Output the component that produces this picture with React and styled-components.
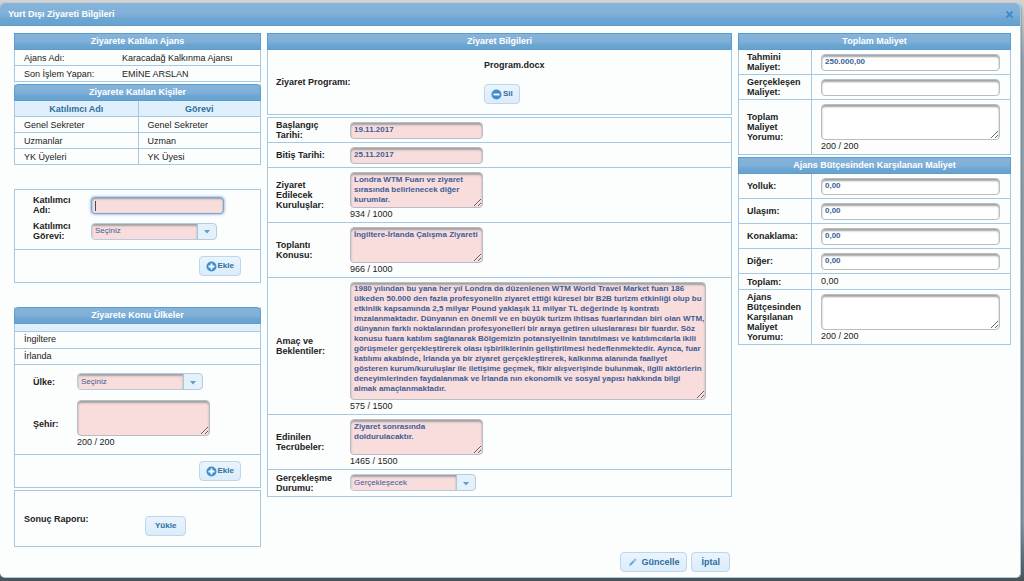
import React from "react";
import styled, { createGlobalStyle, css } from "styled-components";

const line = "#a6c9e2";
const ink = "#222222";
const blue = "#2e6e9e";
const fieldInk = "#3b5f96";

const Global = createGlobalStyle`
  * { box-sizing: border-box; }
  body {
    margin: 0;
    min-height: 100vh;
    display: flow-root;
    background: linear-gradient(#d3d3d3, #98a2a9 60px, #8a959d 90%, #4b5258);
    font: 9px/10px "Liberation Sans", Arial, sans-serif;
    color: ${ink};
  }
`;

const Dialog = styled.main`
  margin: 3px 3px 3px 0;
  background: #fcfdfd;
  border-right: 1px solid ${line};
  border-bottom: 1px solid ${line};
  border-radius: 5px;
  box-shadow: 0 1px 2px #4b5258;
  padding-bottom: 5px;
`;

const headerFill = css`
  color: #ffffff;
  font-weight: bold;
  background: linear-gradient(#86b4da, #7fb0d8 50%, #6ba5d2 75%, #68a3d0);
`;

const TitleBar = styled.header`
  ${headerFill}
  display: flex;
  align-items: center;
  justify-content: space-between;
  height: 23px;
  padding: 0 6px 0 8px;
  border-radius: 5px 5px 0 0;
  border-bottom: 1px solid #5c9ccc;
`;

const Title = styled.h1`
  margin: 0;
  font-size: 9px;
`;

const CloseButton = styled.button`
  border: 0;
  padding: 0;
  width: 9px;
  height: 9px;
  background: none;
  display: flex;
`;

const Columns = styled.div`
  display: grid;
  grid-template-columns: 247fr 465fr 273fr;
  column-gap: 6px;
  padding: 0 9px 0 14px;
`;

const Form = styled(Columns)`
  padding-top: 7px;
  align-items: start;
`;

const Column = styled.div`
  display: flex;
  flex-direction: column;
  gap: ${(p) => p.$gap || 0}px;
  min-width: 0;
`;

const Panel = styled.section`
  border: 1px solid ${line};
  border-top-width: ${(p) => (p.$headed ? 0 : 1)}px;
`;

const PanelTitle = styled.h2`
  ${headerFill}
  margin: 0 -1px;
  height: 17px;
  border: 1px solid #5c9ccc;
  border-radius: ${(p) => (p.$round ? "4px 4px 0 0" : 0)};
  font-size: 9px;
  line-height: 15px;
  text-align: center;
`;

const GroupTitle = styled(PanelTitle)`
  margin: 0;
`;

const DataTable = styled.table`
  width: 100%;
  border-collapse: separate;
  border-spacing: 0;
  table-layout: fixed;

  th, td {
    height: 16px;
    padding: 0 9px;
    text-align: left;
    font-weight: normal;
    border-bottom: 1px solid ${line};
  }
  tbody tr:last-child > * {
    height: 15px;
    border-bottom: 0;
  }
  thead th {
    text-align: center;
    font-weight: bold;
    color: ${blue};
    background: #dfeffc;
  }
  ${(p) => p.$ruled && css`th + th, td + td { border-left: 1px solid ${line}; }`}
`;

const Strip = styled.div`
  height: 8px;
  background: #dfeffc;
  border-bottom: 1px solid ${line};
`;

const CountryList = styled.ul`
  list-style: none;
  margin: 0;
  padding: 0;
`;

const Country = styled.li`
  height: 16px;
  padding: 0 9px;
  line-height: 15px;
  & + & { border-top: 1px solid ${line}; }
`;

const Row = styled.div`
  display: grid;
  grid-template-columns: 73px 1fr;
  align-items: stretch;
  & + & { border-top: 1px solid ${line}; }
`;

const Caption = styled.label`
  display: flex;
  align-items: center;
  padding-left: 8px;
  padding-right: 2px;
  font-weight: bold;
  border-right: ${(p) => (p.$ruled ? `1px solid ${line}` : 0)};
`;

const Cell = styled.div`
  display: flex;
  flex-direction: column;
  align-items: flex-start;
  min-height: ${(p) => (p.$tall ? 26 : 24)}px;
  padding: 4px ${(p) => p.$end || 9}px 2px 9px;
  min-width: 0;
`;

const Counter = styled.span`
  line-height: 12px;
`;

const fieldBox = css`
  border: 1px solid #b9bcc4;
  border-radius: 4px;
  box-shadow: inset 0 2px 2px #a2a2a2;
  background-color: ${(p) => (p.$required ? "#f9dcdc" : "#ffffff")};
  color: ${fieldInk};
  font: bold 8px/10px "Liberation Sans", Arial, sans-serif;
  width: ${(p) => (p.$fill ? "100%" : "133px")};
`;

const TextInput = styled.input`
  ${fieldBox}
  display: block;
  height: 17px;
  padding: 0 3px 2px;
  outline: 0;
  ${(p) => p.$active && css`
    border-color: #7aa6d6;
    box-shadow: inset 0 1px 2px #9a9a9a, 0 0 3px #4f93d8;
    background-image: linear-gradient(#35506e, #35506e);
    background-repeat: no-repeat;
    background-size: 1px 10px;
    background-position: 3px 3px;
  `}
`;

const TextArea = styled.textarea`
  ${fieldBox}
  display: block;
  height: ${(p) => p.$height || 36}px;
  width: ${(p) => (p.$fill ? "100%" : p.$wide ? "356px" : "133px")};
  padding: ${(p) => (p.$wide ? 1 : 2)}px 0 0 3px;
  white-space: pre;
  overflow: hidden;
  resize: both;
`;

const SelectBox = styled.div`
  display: flex;
  width: 126px;
  height: 17px;
  border: 1px solid #b7cbe0;
  border-radius: 4px;
  overflow: hidden;
  background: #e4f1fb;
`;

const Select = styled.select`
  appearance: none;
  flex: 1;
  min-width: 0;
  border: 0;
  border-right: 1px solid ${line};
  padding: 0 3px;
  outline: 0;
  background: #f9dcdc;
  box-shadow: inset 0 2px 2px #a2a2a2;
  color: ${fieldInk};
  font: 8px/10px "Liberation Sans", Arial, sans-serif;
`;

const Trigger = styled.span`
  width: 18px;
  display: flex;
  align-items: center;
  justify-content: center;
  padding-top: 2px;
`;

const Button = styled.button`
  display: inline-flex;
  align-items: center;
  justify-content: center;
  gap: ${(p) => (p.$large ? 4 : 1)}px;
  height: 20px;
  padding: 0 ${(p) => p.$pad || 9}px;
  border: 1px solid #bcd6ea;
  border-radius: 4px;
  background: linear-gradient(#e9f4fd, #dcecfa);
  color: ${blue};
  font: bold ${(p) => (p.$large ? 9 : 8)}px/10px "Liberation Sans", Arial, sans-serif;
`;

const Entry = styled.div`
  display: grid;
  grid-template-columns: ${(p) => p.$label}px 1fr;
  row-gap: ${(p) => p.$gap}px;
  align-items: center;
  padding: ${(p) => p.$top}px 0 ${(p) => p.$bottom}px 18px;
`;

const EntryLabel = styled.label`
  font-weight: bold;
  padding-right: 10px;
`;

const EntryField = styled.div`
  display: flex;
  flex-direction: column;
  align-items: flex-start;
`;

const EntryActions = styled.div`
  display: flex;
  justify-content: flex-end;
  padding: 6px 19px;
  border-top: 1px solid ${line};
`;

const ParticipantPanel = styled(Panel)`
  margin: 24px 0;
`;

const Upload = styled(Panel)`
  display: grid;
  grid-template-columns: 121px 1fr;
  align-items: center;
  height: 57px;
  margin-top: 2px;
  padding-left: 9px;
  font-weight: bold;
`;

const UploadAction = styled.div`
  padding-top: 15px;
`;

const Program = styled(Panel)`
  display: grid;
  grid-template-columns: 208px 1fr;
  padding: 0 8px;
  height: 65px;
  align-items: center;
  font-weight: bold;
`;

const ProgramFile = styled.div`
  display: flex;
  flex-direction: column;
  align-items: flex-start;
  gap: 14px;
`;

const FooterActions = styled.footer`
  grid-column: 2;
  display: flex;
  justify-content: flex-end;
  gap: 4px;
  padding: 5px 2px 0 0;
`;

const CircleIcon = ({ plus }) => (
  <svg width="11" height="11" viewBox="0 0 11 11" aria-hidden="true">
    <circle cx="5.5" cy="5.5" r="5" fill="#3f8fcf" />
    <path d={plus ? "M2.5 5.5h6M5.5 2.5v6" : "M2.5 5.5h6"} stroke="#fff" strokeWidth="1.8" />
  </svg>
);

const PencilIcon = () => (
  <svg width="9" height="9" viewBox="0 0 9 9" aria-hidden="true">
    <path d="M1 8l.7-2.3L5.5 2 7 3.5 3.2 7.3zM6 1.5L7 .5 8.5 2l-1 1z" fill="#6da8d8" />
  </svg>
);

const Dropdown = ({ id, value }) => (
  <SelectBox>
    <Select id={id} defaultValue={value}>
      <option>{value}</option>
    </Select>
    <Trigger aria-hidden="true">
      <svg width="6" height="4" viewBox="0 0 6 4">
        <path d="M0 0h6L3 3.6z" fill="#5a9ed2" />
      </svg>
    </Trigger>
  </SelectBox>
);

const aimText = `1980 yılından bu yana her yıl Londra da düzenlenen WTM World Travel Market fuarı 186
ülkeden 50.000 den fazla profesyonelin ziyaret ettiği küresel bir B2B turizm etkinliği olup bu
etkinlik kapsamında 2,5 milyar Pound yaklaşık 11 milyar TL değerinde iş kontratı
imzalanmaktadır. Dünyanın en önemli ve en büyük turizm ihtisas fuarlarından biri olan WTM,
dünyanın farklı noktalarından profesyonelleri bir araya getiren uluslararası bir fuardır. Söz
konusu fuara katılım sağlanarak Bölgemizin potansiyelinin tanıtılması ve katılımcılarla ikili
görüşmeler gerçekleştirerek olası işbirliklerinin geliştirilmesi hedeflenmektedir. Ayrıca, fuar
katılımı akabinde, İrlanda ya bir ziyaret gerçekleştirerek, kalkınma alanında faaliyet
gösteren kurum/kuruluşlar ile iletişime geçmek, fikir alışverişinde bulunmak, ilgili aktörlerin
deneyimlerinden faydalanmak ve İrlanda nın ekonomik ve sosyal yapısı hakkında bilgi
almak amaçlanmaktadır.`;

const visitFields = [
  { id: "start", label: "Başlangıç Tarihi:", value: "19.11.2017" },
  { id: "end", label: "Bitiş Tarihi:", value: "25.11.2017" },
  {
    id: "orgs",
    label: "Ziyaret Edilecek Kuruluşlar:",
    value: "Londra WTM Fuarı ve ziyaret\nsırasında belirlenecek diğer\nkurumlar.",
    count: "934 / 1000",
  },
  { id: "subject", label: "Toplantı Konusu:", value: "İngiltere-İrlanda Çalışma Ziyareti", count: "966 / 1000" },
  { id: "aim", label: "Amaç ve Beklentiler:", value: aimText, count: "575 / 1500", height: 118, wide: true },
  { id: "lessons", label: "Edinilen Tecrübeler:", value: "Ziyaret sonrasında\ndoldurulacaktır.", count: "1465 / 1500" },
];

const totalFields = [
  { id: "estimated", label: "Tahmini Maliyet:", value: "250.000,00" },
  { id: "actual", label: "Gerçekleşen Maliyet:", value: "" },
  { id: "totalNote", label: "Toplam Maliyet Yorumu:", value: "", count: "200 / 200" },
];

const agencyFields = [
  { id: "allowance", label: "Yolluk:", value: "0,00" },
  { id: "transport", label: "Ulaşım:", value: "0,00" },
  { id: "lodging", label: "Konaklama:", value: "0,00" },
  { id: "other", label: "Diğer:", value: "0,00" },
  { id: "sum", label: "Toplam:", text: "0,00" },
  { id: "agencyNote", label: "Ajans Bütçesinden Karşılanan Maliyet Yorumu:", value: "", count: "200 / 200" },
];

const SumCell = styled.output`
  padding: 2px 9px 3px;
`;

const CostRow = ({ field }) => (
  <Row>
    <Caption htmlFor={field.id} $ruled>{field.label}</Caption>
    {field.text ? (
      <SumCell id={field.id}>{field.text}</SumCell>
    ) : (
      <Cell $end={10}>
        {field.count ? (
          <>
            <TextArea id={field.id} $fill defaultValue={field.value} />
            <Counter>{field.count}</Counter>
          </>
        ) : (
          <TextInput id={field.id} $fill defaultValue={field.value} />
        )}
      </Cell>
    )}
  </Row>
);

export default function App() {
  return (
    <>
      <Global />
      <Dialog>
        <TitleBar>
          <Title>Yurt Dışı Ziyareti Bilgileri</Title>
          <CloseButton aria-label="Kapat">
            <svg width="9" height="9" viewBox="0 0 9 9">
              <path d="M1.5 1.5l6 6M7.5 1.5l-6 6" stroke="#3f8ccb" strokeWidth="2" />
            </svg>
          </CloseButton>
        </TitleBar>
        <Form>
          <Column>
            <Column $gap={2}>
              <Panel $headed>
                <PanelTitle>Ziyarete Katılan Ajans</PanelTitle>
                <DataTable>
                  <colgroup><col width="40%" /><col /></colgroup>
                  <tbody>
                    <tr><th scope="row">Ajans Adı:</th><td>Karacadağ Kalkınma Ajansı</td></tr>
                    <tr><th scope="row">Son İşlem Yapan:</th><td>EMİNE ARSLAN</td></tr>
                  </tbody>
                </DataTable>
              </Panel>
              <Panel $headed>
                <PanelTitle $round>Ziyarete Katılan Kişiler</PanelTitle>
                <DataTable $ruled>
                  <thead>
                    <tr><th>Katılımcı Adı</th><th>Görevi</th></tr>
                  </thead>
                  <tbody>
                    <tr><td>Genel Sekreter</td><td>Genel Sekreter</td></tr>
                    <tr><td>Uzmanlar</td><td>Uzman</td></tr>
                    <tr><td>YK Üyeleri</td><td>YK Üyesi</td></tr>
                  </tbody>
                </DataTable>
              </Panel>
            </Column>
            <ParticipantPanel>
              <Entry $label={58} $gap={6} $top={5} $bottom={8}>
                <EntryLabel htmlFor="name">Katılımcı Adı:</EntryLabel>
                <TextInput id="name" $required $active />
                <EntryLabel htmlFor="role">Katılımcı Görevi:</EntryLabel>
                <Dropdown id="role" value="Seçiniz" />
              </Entry>
              <EntryActions>
                <Button $pad={6}><CircleIcon plus />Ekle</Button>
              </EntryActions>
            </ParticipantPanel>
            <Panel $headed>
              <PanelTitle $round>Ziyarete Konu Ülkeler</PanelTitle>
              <Strip />
              <CountryList>
                <Country>İngiltere</Country>
                <Country>İrlanda</Country>
              </CountryList>
            </Panel>
            <Panel $headed>
              <Entry $label={44} $gap={10} $top={8} $bottom={6}>
                <EntryLabel htmlFor="country">Ülke:</EntryLabel>
                <Dropdown id="country" value="Seçiniz" />
                <EntryLabel htmlFor="city">Şehir:</EntryLabel>
                <EntryField>
                  <TextArea id="city" $required />
                  <Counter>200 / 200</Counter>
                </EntryField>
              </Entry>
              <EntryActions>
                <Button $pad={6}><CircleIcon plus />Ekle</Button>
              </EntryActions>
            </Panel>
            <Upload>
              <span>Sonuç Raporu:</span>
              <UploadAction><Button>Yükle</Button></UploadAction>
            </Upload>
          </Column>

          <Column $gap={2}>
            <Column>
              <GroupTitle>Ziyaret Bilgileri</GroupTitle>
              <Program $headed>
                <span>Ziyaret Programı:</span>
                <ProgramFile>
                  <span>Program.docx</span>
                  <Button $pad={6}><CircleIcon />Sil</Button>
                </ProgramFile>
              </Program>
            </Column>
            <Panel>
              {visitFields.map((f) => (
                <Row key={f.id}>
                  <Caption htmlFor={f.id}>{f.label}</Caption>
                  <Cell>
                    {f.count ? (
                      <>
                        <TextArea id={f.id} $required $height={f.height} $wide={f.wide} defaultValue={f.value} />
                        <Counter>{f.count}</Counter>
                      </>
                    ) : (
                      <TextInput id={f.id} $required defaultValue={f.value} />
                    )}
                  </Cell>
                </Row>
              ))}
              <Row>
                <Caption htmlFor="state">Gerçekleşme Durumu:</Caption>
                <Cell $tall><Dropdown id="state" value="Gerçekleşecek" /></Cell>
              </Row>
            </Panel>
          </Column>

          <Column $gap={2}>
            <Panel $headed>
              <PanelTitle>Toplam Maliyet</PanelTitle>
              {totalFields.map((f) => <CostRow key={f.id} field={f} />)}
            </Panel>
            <Panel $headed>
              <PanelTitle>Ajans Bütçesinden Karşılanan Maliyet</PanelTitle>
              {agencyFields.map((f) => <CostRow key={f.id} field={f} />)}
            </Panel>
          </Column>
        </Form>
        <Columns>
          <FooterActions>
            <Button $large $pad={7}><PencilIcon />Güncelle</Button>
            <Button $large>İptal</Button>
          </FooterActions>
        </Columns>
      </Dialog>
    </>
  );
}
